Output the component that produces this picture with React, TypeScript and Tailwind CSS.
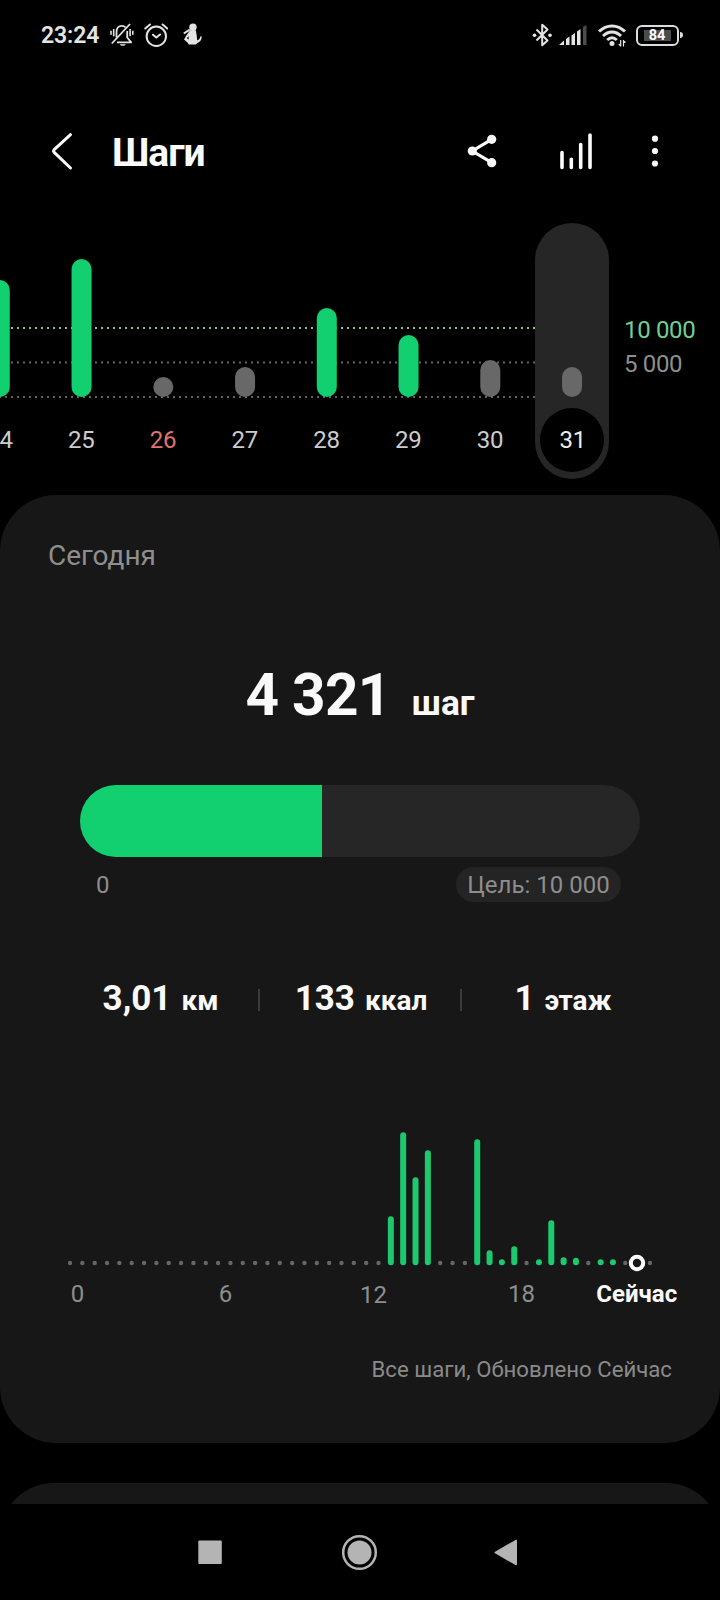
import React from 'react';

interface DayBar {
  label: string;
  height: number;
  reached?: boolean;
  sunday?: boolean;
}

const DAYS: DayBar[] = [
  { label: '24', height: 117, reached: true },
  { label: '25', height: 138, reached: true },
  { label: '26', height: 20, sunday: true },
  { label: '27', height: 30 },
  { label: '28', height: 89, reached: true },
  { label: '29', height: 62, reached: true },
  { label: '30', height: 37 },
  { label: '31', height: 30 },
];

// Half-hour slot -> bar height
const SLOTS: Record<number, number> = {
  26: 49,
  27: 133,
  28: 88,
  29: 115,
  33: 126,
  34: 15,
  35: 6,
  36: 19,
  38: 6,
  39: 45,
  40: 8,
  41: 7.5,
  43: 6,
  44: 6,
};

const NOW_SLOT = 46;

const STATS = [
  { value: '3,01', unit: 'км', pad: 'pl-[5px]' },
  { value: '133', unit: 'ккал', pad: 'pl-[2px]' },
  { value: '1', unit: 'этаж', pad: 'pl-[2px]' },
];

function StatusBar() {
  return (
    <div className="h-[70px] flex items-center pl-[41px] pr-[37px] text-[#e4e4e4]">
      <span className="text-[23px] font-semibold leading-none w-[59px] tracking-[-0.1px]">23:24</span>

      {/* Muted bell */}
      <svg className="ml-2.5 w-6 h-6" viewBox="0 0 24 24" fill="none" stroke="currentColor" strokeWidth="1.8">
        <path d="M6.500 14.500V9c0-4 2.300-6.200 5.200-6.200 1.700 0 3 .6 4 1.700M17.200 8v6.500l4 4.800H7" strokeLinejoin="round" />
        <path d="M20 1L1.800 20.500" />
        <path d="M9.800 21.200h6c-.8 2.200-5.200 2.200-6 0z" fill="currentColor" stroke="none" />
        <path d="M1 7.800v4M3.700 6v7.300M20.100 6v7.300M22.800 7.800v4" strokeWidth="1.600" />
      </svg>

      {/* Alarm clock */}
      <svg className="ml-2.5 w-6 h-6" viewBox="0 0 24 24" fill="none" stroke="currentColor" strokeWidth="2" strokeLinecap="round">
        <circle cx="12.300" cy="13.300" r="9.700" />
        <path d="M9 11.700l3.300 2.800 3.700-3M1.300 5.500L6 1.500M23.300 5.500l-4.700-4" strokeLinejoin="round" />
      </svg>

      {/* Fitness app figure */}
      <svg className="ml-3 w-6 h-6" viewBox="0 0 24 24" fill="currentColor">
        <circle cx="13" cy="4.200" r="3.700" />
        <path d="M10.200 7.200h5.600c.8 3.600 1.200 7.300 1.400 10.300 1.900-.6 2.800-2 3.200-4.200l1.300.3c.2 3.200-1.500 5.600-4.400 6.500L16 21.500H8.800l-1.500-2.300L4 16.500l2.500-4.300z" />
        <path d="M3.800 10.500l6-3.800" stroke="currentColor" strokeWidth="2" />
        <path d="M6.800 15.300l1.700-2 .2 3.200z" fill="black" />
      </svg>

      <div className="ml-auto flex items-center">
        {/* Bluetooth */}
        <svg className="w-[22px] h-6" viewBox="0 0 22 24" fill="none" stroke="currentColor" strokeWidth="2">
          <path d="M5.500 6.500l11 11-5.300 4.800V1.700l5.300 4.800-11 11" strokeLinejoin="round" />
          <circle cx="3.500" cy="12.200" r="1.800" fill="currentColor" stroke="none" />
          <circle cx="19" cy="12.200" r="1.800" fill="currentColor" stroke="none" />
        </svg>

        {/* Mobile signal */}
        <svg className="ml-1.5 w-7 h-5" viewBox="0 0 28 20" fill="currentColor">
          <path d="M0 20l5-4.500V20z" />
          <path d="M7 20v-6l3.500-2.500V20zM12.500 20V10.500L16 8v12zM18 20V6.500L21.500 4v16z" />
          <path d="M24 20V2l3.500-2v20z" fill="#4c4c4c" />
        </svg>

        {/* Wi-Fi */}
        <svg className="ml-[11px] w-7 h-6" viewBox="0 0 28 24" fill="none" stroke="currentColor" strokeWidth="3">
          <path d="M1 8.500C8.500 1 19.500 1 27 8.500" />
          <path d="M5 13c5.500-5.300 12.500-5.300 18 0" />
          <path d="M9.200 17c3-2.800 6.600-2.800 9.600 0" />
          <circle cx="14" cy="20.500" r="2.500" fill="currentColor" stroke="none" />
          <path d="M22.700 17v6.500M25.500 17v6.500M20.800 21l1.900 2M27.400 19.500l-1.900-2" strokeWidth="1.200" />
        </svg>

        {/* Battery */}
        <div className="ml-2.5 w-[43px] h-[21px] rounded-[6px] border-[2.500px] border-[#dcdcdc] flex items-center justify-center">
          <div className="w-[27px] h-[11px] mr-px bg-[#4b4b4b] flex items-center justify-center pt-[3px] text-[14.500px] font-bold leading-none text-white">
            84
          </div>
        </div>
        <div className="ml-px w-[3px] h-[6px] bg-[#dcdcdc] rounded-r-sm" />
      </div>
    </div>
  );
}

function Header() {
  return (
    <header className="h-[150px] pt-3 flex items-center text-[#fafafa]">
      <svg className="ml-[49px] w-6 h-10" viewBox="0 0 24 40" fill="none" stroke="currentColor" strokeWidth="3" strokeLinecap="round" strokeLinejoin="round">
        <path d="M21.500 3.700L5.200 18.700Q4 20 5.200 21.300L21.500 37" />
      </svg>
      <h1 className="ml-[39px] mt-[5px] text-[39px] leading-none font-bold tracking-[-1px]">Шаги</h1>

      <div className="ml-auto flex items-center">
        <svg className="w-8 h-10" viewBox="0 0 32 40" fill="currentColor" stroke="currentColor">
          <path d="M25.700 8.300L6.300 20l19.400 11.700" fill="none" strokeWidth="3.200" />
          <circle cx="25.700" cy="8.300" r="4.600" stroke="none" />
          <circle cx="6.300" cy="20" r="4.600" stroke="none" />
          <circle cx="25.700" cy="31.700" r="4.600" stroke="none" />
        </svg>
        <svg className="ml-[60px] w-9 h-10" viewBox="0 0 36 40" fill="none" stroke="currentColor" strokeWidth="3.600" strokeLinecap="round">
          <path d="M4 21.500v15M13.300 28.300v8.200M22.700 13.500v23M32 4v32.500" />
        </svg>
        <svg className="ml-[53px] mr-[57px] w-4 h-10" viewBox="0 0 16 40" fill="currentColor">
          <circle cx="8" cy="7.700" r="3.100" />
          <circle cx="8" cy="20" r="3.100" />
          <circle cx="8" cy="32.500" r="3.100" />
        </svg>
      </div>
    </header>
  );
}

function WeekChart() {
  const baseline = 177;
  return (
    <svg className="block w-[720px] h-[275px]" viewBox="0 0 720 275" fontSize="24" textAnchor="middle">
      {/* Goal, half goal and zero lines */}
      <line x1="-1" x2="535" y1="108" y2="108" stroke="#86c49d" strokeWidth="2" strokeDasharray="2 4" />
      <line x1="-1" x2="535" y1="142.500" y2="142.500" stroke="#626262" strokeWidth="2" strokeDasharray="2 4" />
      <line x1="-1" x2="535" y1="177" y2="177" stroke="#626262" strokeWidth="2" strokeDasharray="2 4" />

      {/* Selected day */}
      <rect x="535" y="3" width="74" height="256" rx="37" fill="#262626" />
      <circle cx="572" cy="220" r="32" fill="#000000" />

      {DAYS.map((day, i) => {
        const x = i * 81.75 - 0.2;
        const selected = i === DAYS.length - 1;
        return (
          <g key={day.label}>
            <rect
              x={x - 10}
              y={baseline - day.height}
              width="20"
              height={day.height}
              rx="10"
              fill={day.reached ? '#12d070' : '#686868'}
            />
            <text
              x={selected ? x + 0.7 : x - 0.3}
              y="228"
              letterSpacing="-0.3"
              fill={day.sunday ? '#e0746c' : selected ? '#ececec' : '#cccccc'}
            >
              {day.label}
            </text>
          </g>
        );
      })}

      <text x="624" y="118" fill="#72cf93" textAnchor="start" letterSpacing="-0.35">10 000</text>
      <text x="624" y="152" fill="#8e8e8e" textAnchor="start" letterSpacing="-0.35">5 000</text>
    </svg>
  );
}

function DayChart() {
  const slotX = (i: number) => 70 + i * 12.34;
  return (
    <svg className="block w-[720px] h-[302px]" viewBox="0 0 720 302" fontSize="24" fill="#8e8e8e" textAnchor="middle">
      {Array.from({ length: 48 }, (_, i) => {
        const height = SLOTS[i];
        if (height) {
          return <rect key={i} x={slotX(i) - 3} y={247.2 - height} width="6" height={height} rx="3" fill="#1dc96f" />;
        }
        return i === NOW_SLOT ? null : <circle key={i} cx={slotX(i)} cy="245" r="2.200" fill="#666666" />;
      })}
      <circle cx="637" cy="245" r="6.200" fill="#171717" stroke="#ffffff" strokeWidth="4" />

      <text x="77.500" y="284">0</text>
      <text x="225.500" y="284">6</text>
      <text x="373.500" y="284.500">12</text>
      <text x="521.500" y="284">18</text>
      <text x="636.700" y="284" fill="#fafafa" fontWeight="700">Сейчас</text>
    </svg>
  );
}

function TodayCard() {
  return (
    <section className="h-[948px] rounded-[56px] bg-[#171717] pt-[45px]">
      <h2 className="pl-12 text-[28px] leading-8 text-[#8e8e8e]">Сегодня</h2>

      <div className="mt-[93px] h-[60px] flex items-baseline justify-center font-bold text-[#fafafa]">
        <span className="text-[58.500px] leading-[60px] tracking-[-0.700px]">4 321</span>
        <span className="ml-[21px] text-[35.300px] leading-[36px]">шаг</span>
      </div>

      {/* Goal progress */}
      <div className="mt-[60px] mx-20 h-[72px] rounded-full bg-[#262626] overflow-hidden">
        <div className="h-full w-[242px] bg-[#12d070]" />
      </div>
      <div className="mt-2.5 h-[35px] pl-24 pr-[99px] flex items-center justify-between text-2xl leading-none text-[#8e8e8e]">
        <span>0</span>
        <span className="h-[35px] w-[165px] flex items-center justify-center rounded-full bg-[#242424] whitespace-nowrap">
          Цель: 10 000
        </span>
      </div>

      <div className="mt-[76px] h-10 flex items-center justify-center">
        {STATS.map((stat, i) => (
          <React.Fragment key={stat.unit}>
            {i > 0 && <span className="mt-1 w-0.5 h-[22px] bg-[#3a3a3a]" />}
            <div className={`w-[200px] flex items-baseline justify-center pt-1 font-bold leading-10 text-[#fafafa] ${stat.pad}`}>
              <span className="text-[35px]">{stat.value}</span>
              <span className="ml-2.5 text-[28px]">{stat.unit}</span>
            </div>
          </React.Fragment>
        ))}
      </div>

      <DayChart />

      <p className="mt-[35px] pr-12 text-right text-[22.200px] leading-7 text-[#8a8a8a]">Все шаги, Обновлено Сейчас</p>
    </section>
  );
}

function NavBar() {
  return (
    <nav className="h-24 flex items-center text-[#b4b4b4]">
      <svg className="ml-[190px] w-10 h-10" viewBox="0 0 40 40" fill="currentColor">
        <rect x="8.300" y="8.500" width="23.500" height="23.500" rx="1" />
      </svg>
      <svg className="ml-[109px] w-10 h-10" viewBox="0 0 40 40" fill="currentColor">
        <circle cx="20.500" cy="20.500" r="16.300" fill="none" stroke="currentColor" strokeWidth="2.500" />
        <circle cx="20.500" cy="20.500" r="12" />
      </svg>
      <svg className="ml-[109px] w-10 h-10" viewBox="0 0 40 40" fill="currentColor" stroke="currentColor" strokeWidth="2" strokeLinejoin="round">
        <path d="M28 8.800v23.400L7.500 20.500z" />
      </svg>
    </nav>
  );
}

export default function App() {
  return (
    <div className="w-[720px] h-[1600px] overflow-hidden bg-black font-[Roboto,sans-serif]">
      <StatusBar />
      <Header />
      <WeekChart />
      <TodayCard />
      {/* Top edge of the next card */}
      <div className="mt-10 h-[21px] overflow-hidden">
        <div className="h-32 rounded-[54px] bg-[#171717]" />
      </div>
      <NavBar />
    </div>
  );
}
